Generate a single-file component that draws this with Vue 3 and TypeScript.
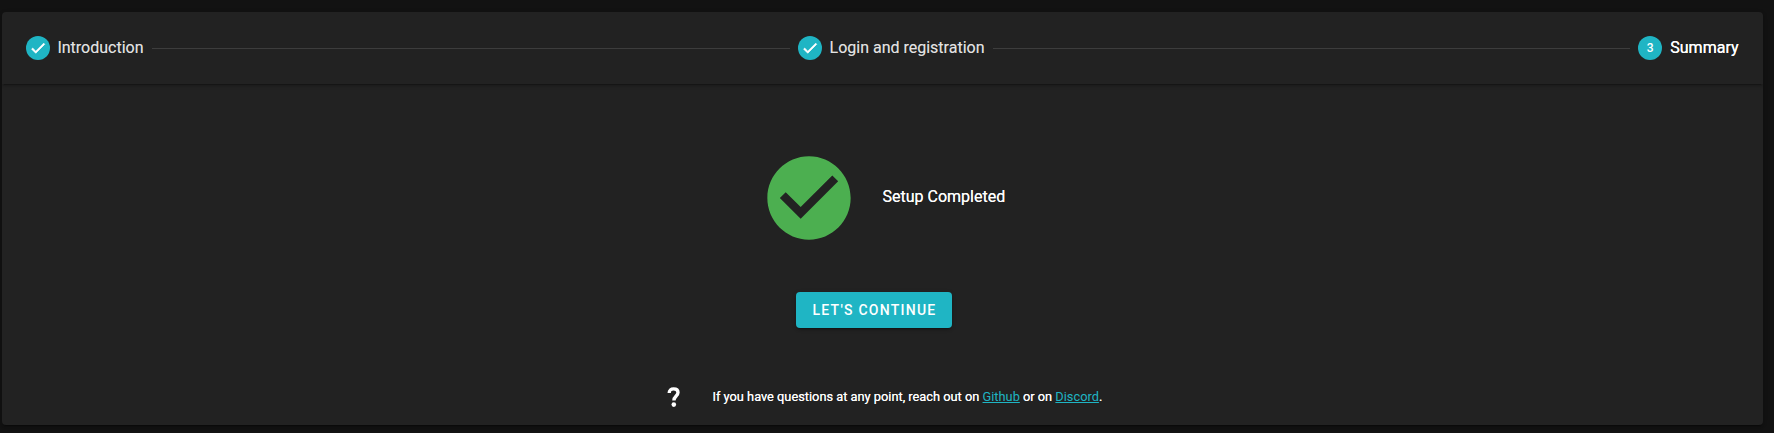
<script setup lang="ts">
interface Step {
  label: string
  complete: boolean
}

const steps: Step[] = [
  { label: 'Introduction', complete: true },
  { label: 'Login and registration', complete: true },
  { label: 'Summary', complete: false },
]
</script>

<template>
  <main class="page">
    <section class="stepper">
      <header class="stepper-header">
        <template v-for="(step, index) in steps" :key="step.label">
          <hr v-if="index > 0" class="divider" />
          <div class="step" :class="{ active: !step.complete }">
            <span class="badge">
              <svg v-if="step.complete" viewBox="0 0 24 24" width="18" height="18">
                <path
                  fill="#fff"
                  stroke="#fff"
                  stroke-width="0.9"
                  d="M21,7L9,19L3.5,13.5L4.91,12.09L9,16.17L19.59,5.59L21,7Z"
                />
              </svg>
              <template v-else>{{ index + 1 }}</template>
            </span>
            <span class="label">{{ step.label }}</span>
          </div>
        </template>
      </header>
      <div class="content">
        <div class="done">
          <svg viewBox="0 0 24 24" width="100" height="100">
            <path
              fill="#4caf50"
              d="M12 2C6.5 2 2 6.5 2 12S6.5 22 12 22 22 17.5 22 12 17.5 2 12 2M10 17L5 12L6.41 10.59L10 14.17L17.59 6.58L19 8L10 17Z"
            />
          </svg>
          <span class="done-text">Setup Completed</span>
        </div>
        <button class="continue" type="button">Let's continue</button>
        <div class="help">
          <svg class="help-icon" viewBox="0 0 24 24" width="24" height="24">
            <path
              d="M7.2 8C7.2 5.3 9 3.9 11.6 3.9C14.5 3.9 16 5.3 16 7.6C16 10.9 11.9 11.2 11.9 15.5"
              fill="none"
              stroke="#fff"
              stroke-width="3.4"
            />
            <circle cx="11.8" cy="19.6" r="2.3" fill="#fff" />
          </svg>
          <p class="help-text">
            If you have questions at any point, reach out on <a href="#">Github</a> or on <a href="#">Discord</a>.
          </p>
        </div>
      </div>
    </section>
  </main>
</template>

<style>
body {
  margin: 0;
  background: #121212;
  overflow: hidden;
}
</style>

<style scoped>
.page {
  box-sizing: border-box;
  height: 433px;
  padding: 12px 11px 8px 2px;
  background: #121212;
  color: #fff;
  font-family: Roboto, sans-serif;
}
.stepper {
  height: 413px;
  border-radius: 4px;
  overflow: hidden;
  background: #222;
  box-shadow: 0 3px 1px -2px rgba(0, 0, 0, 0.2), 0 2px 2px rgba(0, 0, 0, 0.14), 0 1px 5px rgba(0, 0, 0, 0.12);
}
.stepper-header {
  box-sizing: border-box;
  display: flex;
  align-items: center;
  height: 72px;
  padding: 0 24.5px 0 24px;
  box-shadow: 0 3px 1px -2px rgba(0, 0, 0, 0.2), 0 2px 2px rgba(0, 0, 0, 0.14), 0 1px 5px rgba(0, 0, 0, 0.12);
}
.divider {
  flex: 1;
  height: 0;
  margin: 1px 8px 0;
  border: 0;
  border-top: 1px solid #3d3d3d;
}
.divider:first-of-type {
  flex: 1 0 1px;
}
.step {
  display: flex;
  align-items: center;
}
.badge {
  display: flex;
  align-items: center;
  justify-content: center;
  width: 24px;
  height: 24px;
  margin-right: 7.4px;
  border-radius: 50%;
  background: #1fb5c4;
  font-size: 12px;
  font-weight: 500;
}
.active .badge {
  margin-right: 8.2px;
}
.label {
  color: rgba(255, 255, 255, 0.75);
  font-size: 16px;
  line-height: 16px;
  text-shadow: 0 0 0 rgba(255, 255, 255, 0.5);
}
.active .label {
  color: #fff;
  text-shadow: 0 0 0 #fff;
}
.content {
  display: flex;
  flex-direction: column;
}
.done {
  display: flex;
  align-items: center;
  margin: 64px 0 0 757px;
}
.done-text {
  margin-top: -3px;
  margin-left: 23.5px;
  font-size: 16px;
  line-height: 24px;
  text-shadow: 0 0 0 rgba(255, 255, 255, 0.8);
}
.continue {
  width: 156px;
  height: 36px;
  margin: 44px 0 0 794px;
  padding: 0 0 0 1px;
  border: 0;
  border-radius: 4px;
  background: #1fb5c4;
  box-shadow: 0 3px 1px -2px rgba(0, 0, 0, 0.2), 0 2px 2px rgba(0, 0, 0, 0.14), 0 1px 5px rgba(0, 0, 0, 0.12);
  color: #fff;
  font: 500 14px Roboto, sans-serif;
  letter-spacing: 1.25px;
  text-transform: uppercase;
}
.help {
  display: flex;
  align-items: center;
  margin: 57px 0 0 660px;
}
.help-text {
  margin: 0 0 0 26.5px;
  font-size: 12.8px;
  line-height: 20px;
  white-space: nowrap;
  text-shadow: 0 0 0 rgba(255, 255, 255, 0.8);
}
.help-text a {
  color: #1fb5c4;
  text-shadow: none;
}
</style>
